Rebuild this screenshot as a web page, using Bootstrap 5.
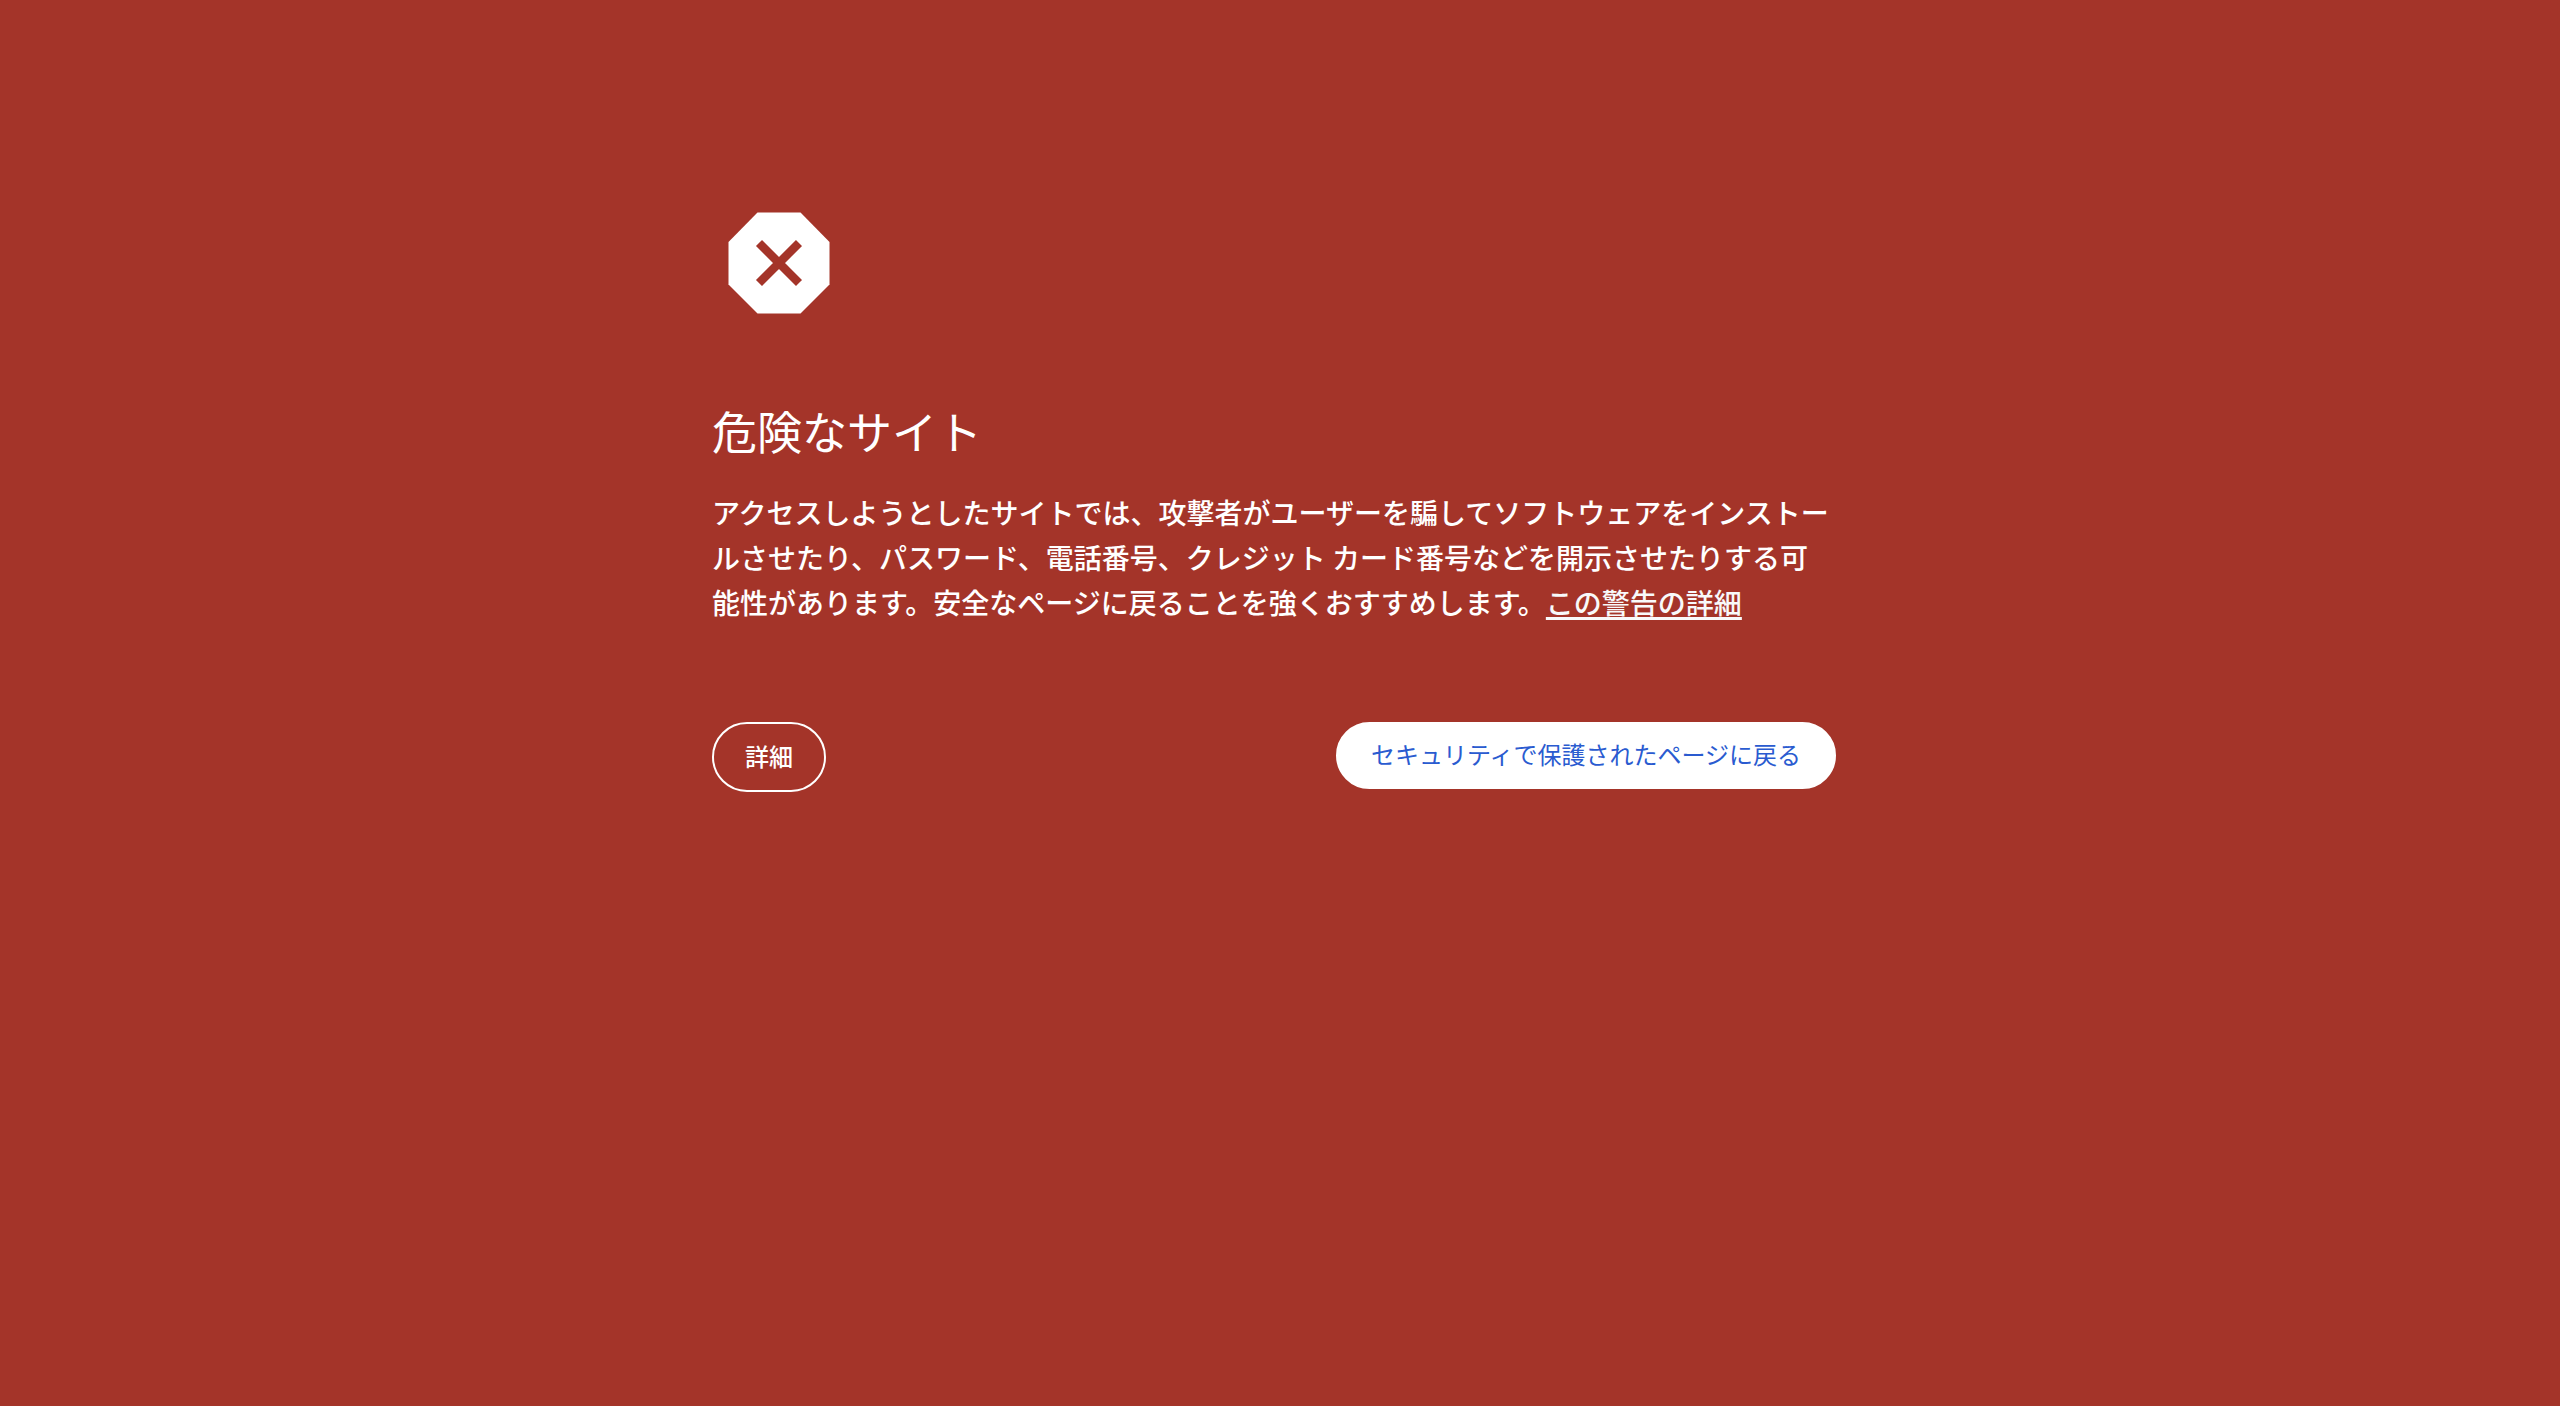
<!DOCTYPE html>
<html lang="ja">
<head>
<meta charset="utf-8">
<meta name="viewport" content="width=device-width, initial-scale=1">
<title>危険なサイト</title>
<link href="https://cdn.jsdelivr.net/npm/bootstrap@5.3.0/dist/css/bootstrap.min.css" rel="stylesheet">
<style>
  body {
    background: #a43429;
    color: #fff;
    font-family: "Noto Sans CJK JP", sans-serif;
    padding-right: 12px;
  }
  .warning-page { max-width: 1124px; padding-top: 200px; }
  .warning-icon { width: 128px; height: 128px; margin-left: 3px; }
  .warning-title { font-size: 45px; line-height: 60px; margin: 73px 0 29px; font-weight: 400; }
  .warning-text { font-size: 28px; line-height: 45px; margin-bottom: 97px; font-weight: 500; }
  .warning-text a { text-underline-offset: 3px; text-decoration-thickness: 3px; text-decoration-skip-ink: none; }
  .btn-pill { font-size: 24px; line-height: 36px; padding: 14px 31px 16px; border: 2px solid #fff; font-weight: 500; }
  .btn-safe {
    --bs-btn-color: #2a5bd0; --bs-btn-bg: #fff;
    --bs-btn-hover-color: #2a5bd0; --bs-btn-hover-bg: #f1f3f4;
    padding: 12px 33px 15px;
    font-weight: 400;
  }
</style>
</head>
<body>
<main class="warning-page mx-auto">
  <svg class="warning-icon d-block" viewBox="0 0 128 128" aria-hidden="true">
    <path fill="#fff" d="M42.5 12.5h43l29 29.5v42.5l-29 29h-43l-29-29V42z"/>
    <path stroke="#a43429" stroke-width="8.5" d="M44 43l40 40M84 43L44 83"/>
  </svg>
  <h1 class="warning-title">危険なサイト</h1>
  <p class="warning-text">アクセスしようとしたサイトでは、攻撃者がユーザーを騙してソフトウェアをインストールさせたり、パスワード、電話番号、クレジット カード番号などを開示させたりする可能性があります。安全なページに戻ることを強くおすすめします。<a class="link-light" href="#details">この警告の詳細</a></p>
  <div class="d-flex justify-content-between align-items-start">
    <button type="button" class="btn btn-outline-light btn-pill rounded-pill text-white">詳細</button>
    <button type="button" class="btn btn-pill btn-safe rounded-pill">セキュリティで保護されたページに戻る</button>
  </div>
</main>
<script src="https://cdn.jsdelivr.net/npm/bootstrap@5.3.0/dist/js/bootstrap.bundle.min.js"></script>
</body>
</html>
